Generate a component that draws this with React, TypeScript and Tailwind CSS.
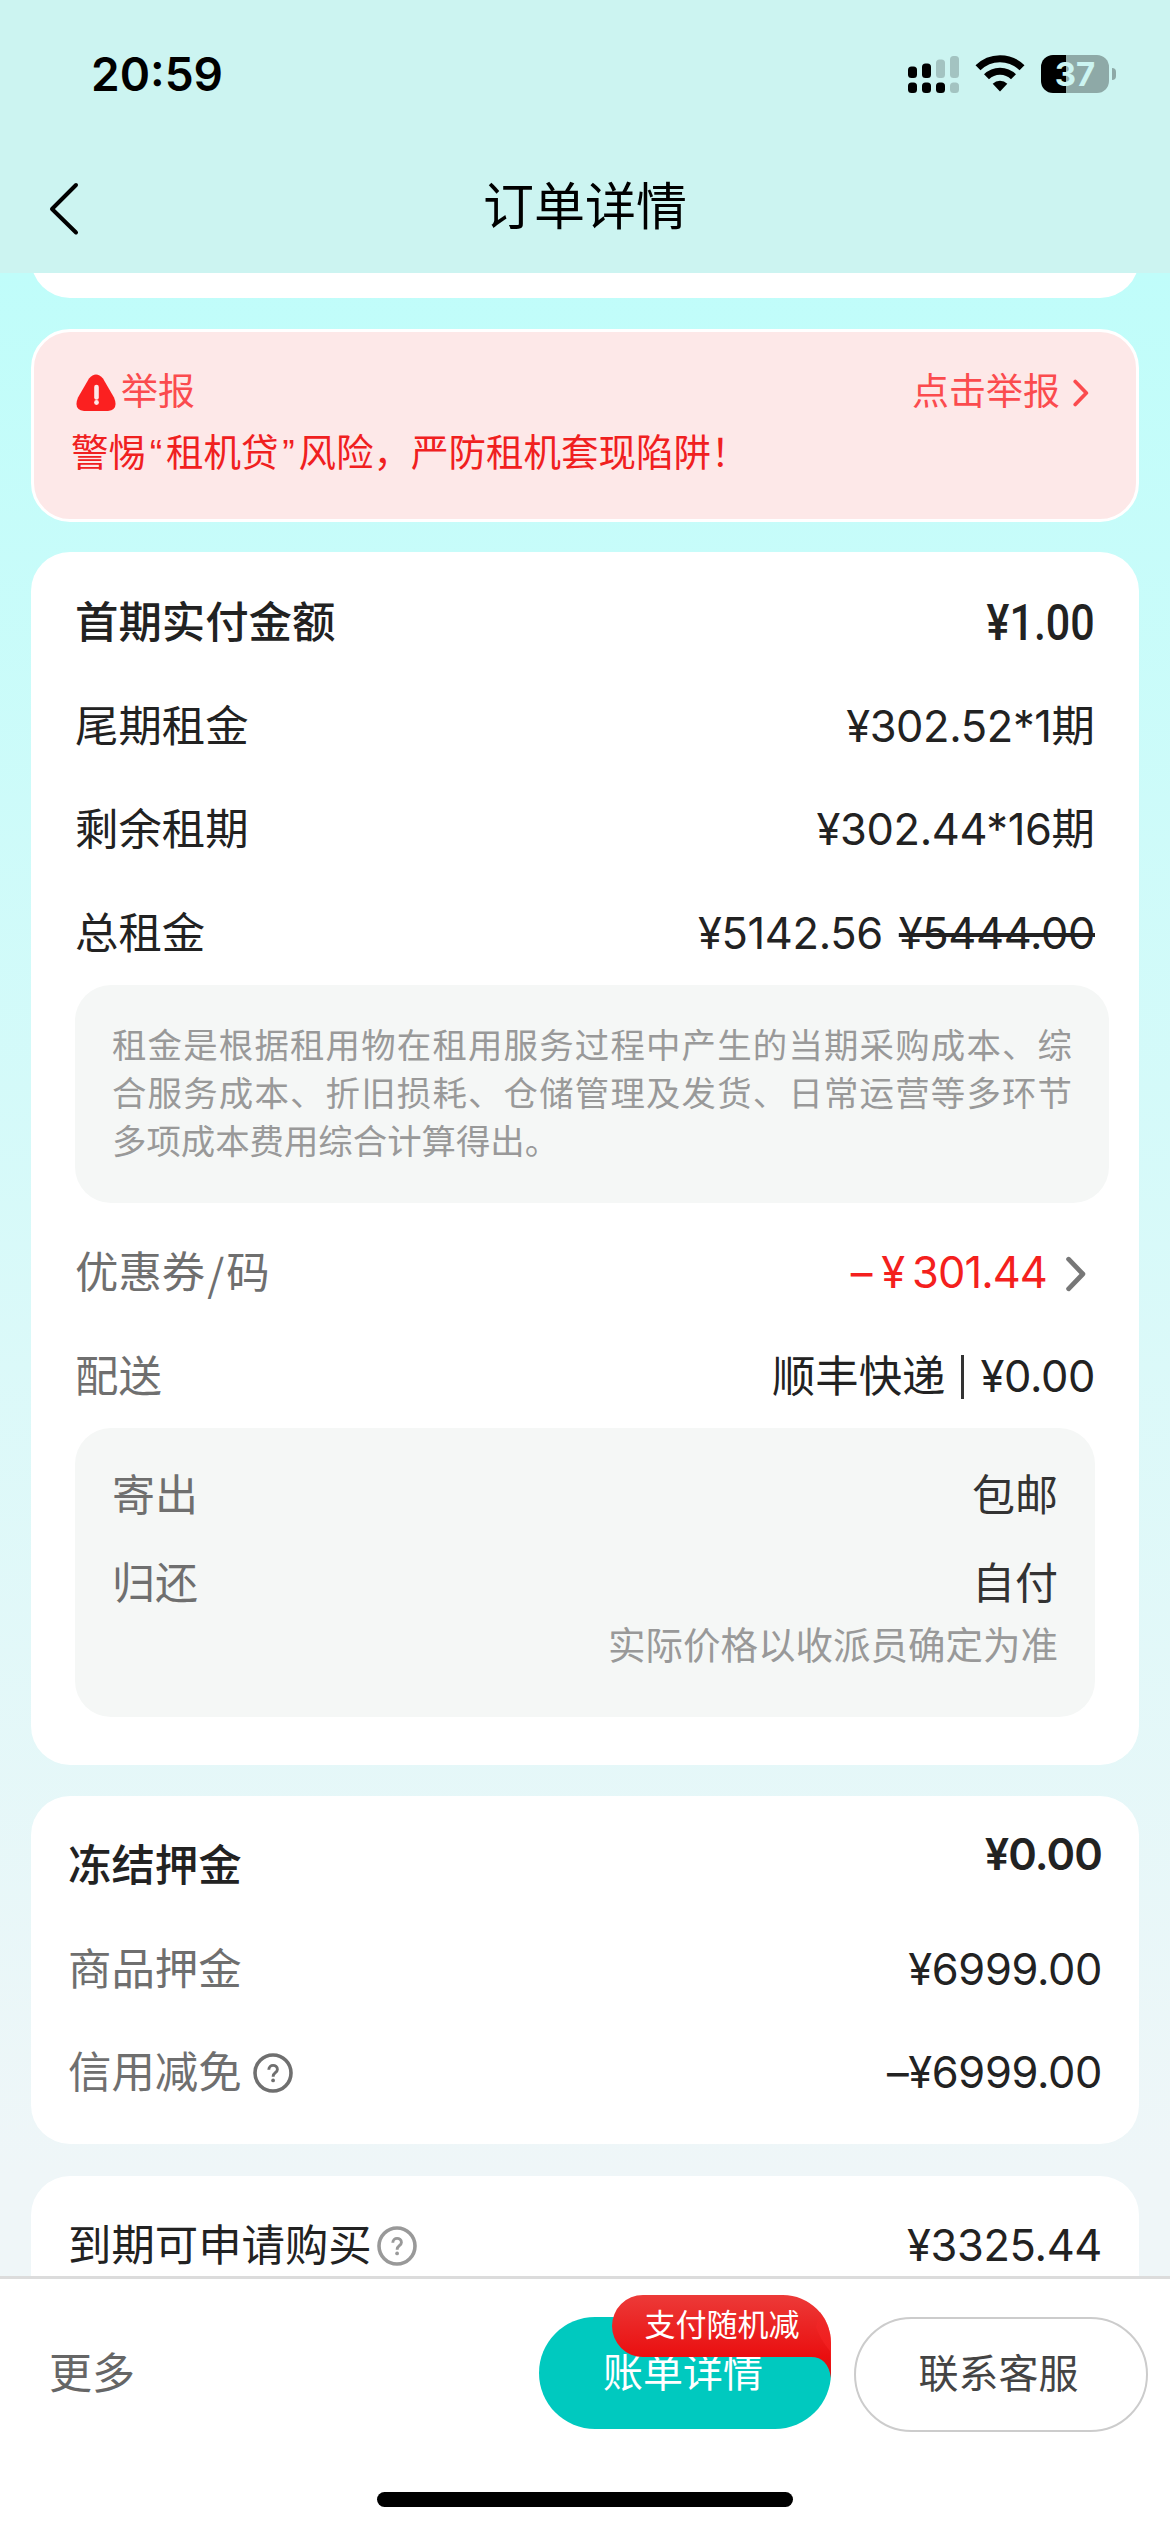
import { ReactNode } from 'react';

type RowProps = {
  label: ReactNode;
  children: ReactNode;
  muted?: boolean;
};

const Row = ({ label, children, muted }: RowProps) => (
  <div className="flex h-[103.5px] items-center justify-between pt-[2px] text-[#222]">
    <div className={muted ? 'flex items-center text-[#6f6f6f]' : 'flex items-center'}>{label}</div>
    <div className="flex items-center whitespace-nowrap">{children}</div>
  </div>
);

const Price = ({ children, className = '-mt-[2px] tracking-[-0.35px]' }: { children: ReactNode; className?: string }) => (
  <span className={`font-['Inter'] text-[43.400px] ${className}`}>{children}</span>
);

const Chevron = ({ className }: { className: string }) => (
  <svg viewBox="0 0 20 34" fill="none" stroke="currentColor" strokeLinecap="round" strokeLinejoin="round" className={className}>
    <path d="M3 3l13.5 14L3 31" />
  </svg>
);

const HelpIcon = ({ className }: { className: string }) => (
  <svg viewBox="0 0 40 40" fill="none" stroke="currentColor" className={className}>
    <circle cx="20" cy="20" r="18" strokeWidth="3.6" />
    <path d="M15.8 16.8c0-6 8.6-5.600 8.600-.4 0 3-4.200 3.400-4.200 6.600v.8" strokeWidth="2.900" />
    <circle cx="20.100" cy="27.400" r="1.900" fill="currentColor" stroke="none" />
  </svg>
);

const StatusBar = () => (
  <div className="flex h-[141px] items-start justify-between pl-[91px] pr-[54px]">
    <span className="mt-[48px] font-['Inter'] text-[46px] leading-[52px] font-semibold text-black">20:59</span>
    <div className="mt-[55px] flex items-start">
      <svg width="52" height="38" viewBox="0 0 52 38" className="mt-[1px]">
        <g fill="#000">
          <rect x="0" y="10.500" width="9" height="11.500" rx="3.500" />
          <rect x="14" y="7.500" width="9" height="14.500" rx="3.500" />
          <rect x="0" y="26.500" width="9" height="10.500" rx="3.500" />
          <rect x="14" y="26.500" width="9" height="10.500" rx="3.500" />
          <rect x="28" y="26.500" width="9" height="10.500" rx="3.500" />
        </g>
        <g fill="#a3c3c1">
          <rect x="28" y="3.500" width="9" height="18.500" rx="3.500" />
          <rect x="42" y="0" width="9" height="22" rx="3.500" />
          <rect x="42" y="26.500" width="9" height="10.500" rx="3.500" />
        </g>
      </svg>
      <svg width="50" height="38" viewBox="0 0 50 38" className="ml-[15px]">
        <g fill="none" stroke="#000" strokeWidth="7">
          <path d="M3 12.800a31 31 0 0 1 44 0" />
          <path d="M11.500 21.800a19 19 0 0 1 27 0" />
        </g>
        <path d="M25 36.500l-7.300-7.800a10.500 10.500 0 0 1 14.600 0z" fill="#000" />
      </svg>
      <div className="ml-[16px] flex h-[38px] w-[68px] items-center justify-center rounded-[12px] bg-[linear-gradient(90deg,#000_25px,#8ea9a7_25px)]">
        <span className="font-['Inter'] text-[33px] leading-[38px] font-bold text-[#ccf4f1]">37</span>
      </div>
      <div className="mt-[13px] ml-[3px] h-[12px] w-[4px] rounded-r-full bg-[#8ea9a7]" />
    </div>
  </div>
);

const Header = () => (
  <header className="h-[273px] shrink-0 bg-[#ccf4f1]">
    <StatusBar />
    <div className="flex h-[132px] items-start px-[48px] pt-[40px]">
      <svg width="32" height="56" viewBox="0 0 32 56" fill="none" stroke="#000" strokeWidth="4" strokeLinecap="round" strokeLinejoin="round">
        <path d="M28 4L4 28l24 23.500" />
      </svg>
      <h1 className="-mt-[6px] mr-[32px] flex-1 text-center text-[51px] leading-[66px] text-black">订单详情</h1>
    </div>
  </header>
);

const ReportCard = () => (
  <section className="mt-[31px] h-[193px] rounded-[39px] border-[3px] border-white bg-[#fde8e8] pt-[36px] pr-[45px] pl-[37px]">
    <div className="flex h-[50px] items-center text-[37px] text-[#fb4b4e]">
      <svg width="40" height="38" viewBox="0 0 40 38" className="ml-[5px]">
        <path d="M13 4.500Q20-3.500 27 4.500L38 23.500Q43 35.500 32 37H8Q-3 35.500 2 23.500z" fill="#fb2020" />
        <path d="M20.500 13v10.500" stroke="#fde8e8" strokeWidth="4.600" strokeLinecap="round" />
        <circle cx="20.500" cy="28.500" r="2.400" fill="#fde8e8" />
      </svg>
      <span className="ml-[5px]">举报</span>
      <span className="ml-auto">点击举报</span>
      <Chevron className="ml-[11px] h-[28px] w-[20px] stroke-[4.5]" />
    </div>
    <p className="mt-[10px] flex text-[37.5px] leading-[50px] text-[#f0201f]">
      警惕<span className="w-[20px] text-center">“</span>租机贷<span className="w-[20px] text-center">”</span>风险，严防租机套现陷阱！
    </p>
  </section>
);

const RentCard = () => (
  <section className="mt-[30px] h-[1213px] rounded-[39px] bg-white px-[44px] pt-[19px]">
    <Row label={<span className="font-medium">首期实付金额</span>}>
      <span className="origin-right scale-x-[0.86] font-['Roboto'] text-[50px] font-medium">¥1.00</span>
    </Row>
    <Row label="尾期租金">
      <Price>¥302.52*1</Price>期
    </Row>
    <Row label="剩余租期">
      <Price>¥302.44*16</Price>期
    </Row>
    <Row label="总租金">
      <Price>¥5142.56</Price>
      <Price className="-mt-[2px] ml-[16px] tracking-[-0.35px] line-through decoration-[4px]">¥5444.00</Price>
    </Row>
    <p className="-mr-[14px] rounded-[36px] bg-[#f5f7f6] px-[37px] py-[37px] text-justify text-[34.400px] leading-[48px] text-[#999]">
      租金是根据租用物在租用服务过程中产生的当期采购成本、综合服务成本、折旧损耗、仓储管理及发货、日常运营等多环节多项成本费用综合计算得出。
    </p>
    <div className="mt-[18px]">
      <Row
        muted
        label={
          <>
            优惠券<span className="mx-[2px] -mt-[3px] font-['Noto_Sans_CJK_SC']">/</span>码
          </>
        }>
        <span className="flex text-[#f4201d]">
          <Price>–</Price>
          <Price className="-mt-[2px] mr-[7px] ml-[9px]">¥</Price>
          <Price className="-mt-[2px] tracking-[-0.9px]">301.44</Price>
        </span>
        <Chevron className="mr-[8px] ml-[18px] h-[36px] w-[22px] stroke-[4.5] text-[#777]" />
      </Row>
      <Row muted label="配送">
        顺丰快递
        <span className="mx-[16px] h-[44px] w-[3px] bg-[#333]" />
        <Price>¥0.00</Price>
      </Row>
    </div>
    <div className="h-[289px] rounded-[36px] bg-[#f5f7f6] px-[37px] pt-[24px] text-[43px]">
      <div className="flex h-[88px] items-center justify-between">
        <span className="text-[#6f6f6f]">寄出</span>
        <span className="text-[#333]">包邮</span>
      </div>
      <div className="flex h-[88px] items-center justify-between">
        <span className="text-[#6f6f6f]">归还</span>
        <span className="text-[#333]">自付</span>
      </div>
      <p className="-mt-[7px] text-right text-[37.500px] leading-[50px] text-[#999]">实际价格以收派员确定为准</p>
    </div>
  </section>
);

const DepositCard = () => (
  <section className="mt-[31px] h-[348px] rounded-[39px] bg-white px-[37px] pt-[18px]">
    <Row label={<span className="font-medium">冻结押金</span>}>
      <Price className="-mt-[24px] font-semibold tracking-[-0.9px]">¥0.00</Price>
    </Row>
    <Row muted label="商品押金">
      <Price>¥6999.00</Price>
    </Row>
    <Row
      muted
      label={
        <>
          信用减免
          <HelpIcon className="-mt-[1px] ml-[11px] h-[40px] w-[40px]" />
        </>
      }>
      <Price>–</Price>
      <Price>¥6999.00</Price>
    </Row>
  </section>
);

const BuyoutCard = () => (
  <section className="mt-[32px] h-[140px] rounded-t-[39px] bg-white px-[37px] pt-[18px]">
    <Row
      label={
        <>
          到期可申请购买
          <HelpIcon className="-mt-[1px] ml-[5px] h-[40px] w-[40px] text-[#999]" />
        </>
      }>
      <Price>¥3325.44</Price>
    </Row>
  </section>
);

const Footer = () => (
  <footer className="flex h-[256px] shrink-0 flex-col items-center border-t-[3px] border-[#dcdcdc] bg-white">
    <div className="flex w-full items-start pt-[38px] pr-[22px] pl-[49px]">
      <span className="text-[43px] leading-[114px] text-[#666]">更多</span>
      <button className="relative ml-auto h-[112px] w-[292px] rounded-full bg-[#00c9bf] pr-[4px] text-[40px] text-white">
        账单详情
        <span className="absolute -top-[22px] right-0 h-[83px] w-[219px]">
          <svg viewBox="0 0 219 83" className="absolute inset-0">
            <defs>
              <linearGradient id="tag" x1="0" y1="0" x2="0" y2="1">
                <stop offset="0" stopColor="#ec3a38" />
                <stop offset="0.75" stopColor="#ea0e0f" />
                <stop offset="1" stopColor="#d41212" />
              </linearGradient>
              <linearGradient id="fold" x1="0" y1="0" x2="0" y2="1">
                <stop offset="0" stopColor="#ee2a2a" />
                <stop offset="1" stopColor="#ff1c1c" />
              </linearGradient>
            </defs>
            <path d="M31 0H171A48 48 0 0 1 219 48V83Q216 62 199 62H31A31 31 0 0 1 31 0z" fill="url(#tag)" />
            <path d="M204 32Q208 44 218 56L219 83V48Q219 30 208 17z" fill="url(#fold)" opacity="0.6" />
          </svg>
          <span className="relative block pl-[1px] text-center text-[31px] leading-[62px]">支付随机减</span>
        </span>
      </button>
      <button className="ml-[23px] h-[115px] w-[294px] rounded-full border-2 border-[#ccc] pr-[5px] pb-[2px] text-[40px] text-[#444]">联系客服</button>
    </div>
    <div className="mt-[60px] h-[15px] w-[416px] rounded-full bg-black" />
  </footer>
);

const App = () => {
  return (
    <div className="flex h-[2532px] w-[1170px] flex-col overflow-hidden bg-[#eef6f8] font-['Liberation_Sans','Noto_Sans_CJK_SC',sans-serif] text-[43.400px]">
      <Header />
      <main className="flex flex-1 flex-col overflow-hidden bg-[linear-gradient(180deg,#c0fdfa,#eff6f8_95%)] px-[31px] *:shrink-0">
        <div className="-mt-[55px] h-[80px] rounded-b-[39px] bg-white" />
        <ReportCard />
        <RentCard />
        <DepositCard />
        <BuyoutCard />
      </main>
      <Footer />
    </div>
  );
};

export default App;
